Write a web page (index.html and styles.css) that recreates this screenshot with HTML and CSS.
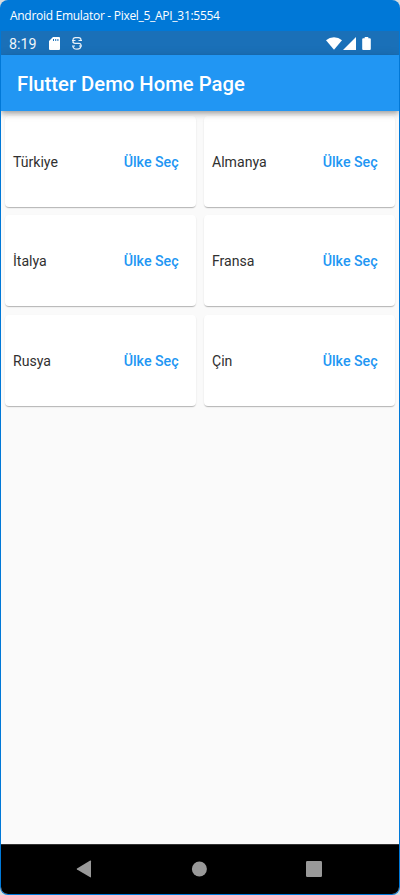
FILE: index.html
```html
<!DOCTYPE html>
<html lang="tr">
<head>
<meta charset="utf-8">
<title>Android Emulator</title>
<link rel="stylesheet" href="styles.css">
</head>
<body>
<div class="window">
  <div class="titlebar"><span>Android Emulator - Pixel_5_API_31:5554</span></div>
  <div class="screen">
    <div class="status">
      <span class="clock">8:19</span>
      <svg class="sd" width="11" height="13" viewBox="0 0 11 13"><path fill="#fff" fill-rule="evenodd" d="M4 0h6q1 0 1 1v11q0 1-1 1H1q-1 0-1-1V4zM4 2v2h1V2zM6.200 2v2h1V2zM8.400 2v2h1V2z"/></svg>
      <svg class="debug" width="10" height="13" viewBox="0 0 10 13" fill="none" stroke="#e8f0f8" stroke-width="1.2"><path d="M1 6V3Q1 .7 3.500 .7H6.500Q9 .7 9 3V4M1 4Q1 6.300 3 6.300H7Q9 6.300 9 8.300Q9 12.200 5 12.200Q1 12.200 1 9M0 3.500H3.500M6.500 3.500H10M0 9H3M7 9H10"/></svg>
      <svg class="wifi" width="16" height="13" viewBox="0 0 16 13"><path fill="#fff" d="M0 3.200Q3.500 .3 8 .3T16 3.200L8 12.800z"/></svg>
      <svg class="signal" width="13" height="13" viewBox="0 0 13 13"><path fill="#fff" d="M13 0v13H0z"/></svg>
      <svg class="battery" width="9" height="13" viewBox="0 0 9 13"><path fill="#fff" d="M2.700 0h3.600v1.200h1.500q1 0 1 1V12q0 1-1 1H1.200q-1 0-1-1V2.200q0-1 1-1h1.500z"/></svg>
    </div>
    <header class="appbar"><h1>Flutter Demo Home Page</h1></header>
    <main class="grid">
      <div class="card"><span>Türkiye</span><button>Ülke Seç</button></div>
      <div class="card"><span>Almanya</span><button>Ülke Seç</button></div>
      <div class="card"><span>İtalya</span><button>Ülke Seç</button></div>
      <div class="card"><span>Fransa</span><button>Ülke Seç</button></div>
      <div class="card"><span>Rusya</span><button>Ülke Seç</button></div>
      <div class="card"><span>Çin</span><button>Ülke Seç</button></div>
    </main>
    <nav class="navbar">
      <svg width="16" height="18" viewBox="0 0 16 18"><path fill="#999" d="M14.200 .6q.8-.3.8.6v15.600q0 .9-.8.5L1 9.600q-.8-.6 0-1.200z"/></svg>
      <svg width="16" height="18" viewBox="0 0 16 18"><circle cx="8.400" cy="9" r="7.500" fill="#999"/></svg>
      <svg width="16" height="18" viewBox="0 0 16 18"><rect y="1" width="16" height="16" rx="1.300" fill="#999"/></svg>
    </nav>
  </div>
</div>
</body>
</html>
```
FILE: styles.css
```css
* { box-sizing: border-box; }
body { margin: 0; background: #d9dcde; font-family: Roboto, sans-serif; }
.window {
  display: flex; flex-direction: column;
  width: 400px; height: 895px; padding: 0 1px 1px;
  background: #0078d7; border-radius: 8px; overflow: hidden;
}
.titlebar {
  flex: none; height: 31px; padding-left: 9px;
  font: 12px/31px "Open Sans", sans-serif; letter-spacing: -0.29px;
  color: #fff; white-space: nowrap;
}
.screen {
  flex: 1; display: flex; flex-direction: column;
  background: #fafafa; border-radius: 0 0 7px 7px; overflow: hidden;
}
.status {
  flex: none; display: flex; align-items: center; height: 24px;
  padding: 0 28px 0 8px; background: #1a70b8; color: #fff;
}
.clock { width: 40px; padding-top: 1px; font-size: 14.2px; line-height: 24px; color: #f0f5fa; }
.debug { margin-left: 12px; }
.wifi { margin-left: auto; }
.signal { margin-left: 1px; }
.battery { margin-left: 6px; }
.appbar {
  flex: none; display: flex; align-items: center; height: 56px; margin-bottom: .5px;
  padding: 2px 16px 0; background: #2196f3; color: #fff; z-index: 1;
  box-shadow: 0 2px 4px -1px rgba(0,0,0,.2), 0 4px 5px rgba(0,0,0,.14), 0 1px 10px rgba(0,0,0,.12);
}
h1 { margin: 0; font-size: 20.25px; font-weight: 500; white-space: nowrap; }
.grid {
  flex: 1; display: grid; grid-template-columns: 1fr 1fr;
  grid-auto-rows: 99.5px; align-content: start;
}
.card {
  display: flex; align-items: center; justify-content: space-between;
  margin: 4px 4.400px 4.200px 4px; padding: 0 9px 0 8px; background: #fff; border-radius: 4px;
  box-shadow: 0 2px 1px -1px rgba(0,0,0,.14), 0 1px 1px rgba(0,0,0,.1), 0 1px 2px rgba(0,0,0,.08);
  font-size: 14.1px; color: #303030;
}
.card span { padding-top: 1px; }
button {
  padding: 9px 8px 8px; border: 0; background: none; color: #2196f3;
  font: 500 14.2px Roboto, sans-serif; white-space: nowrap;
}
.navbar {
  flex: none; display: flex; align-items: center; justify-content: space-between;
  height: 50px; padding: 0 77px 2px 75px; background: #000; border-top: 1px solid #333;
}
```
